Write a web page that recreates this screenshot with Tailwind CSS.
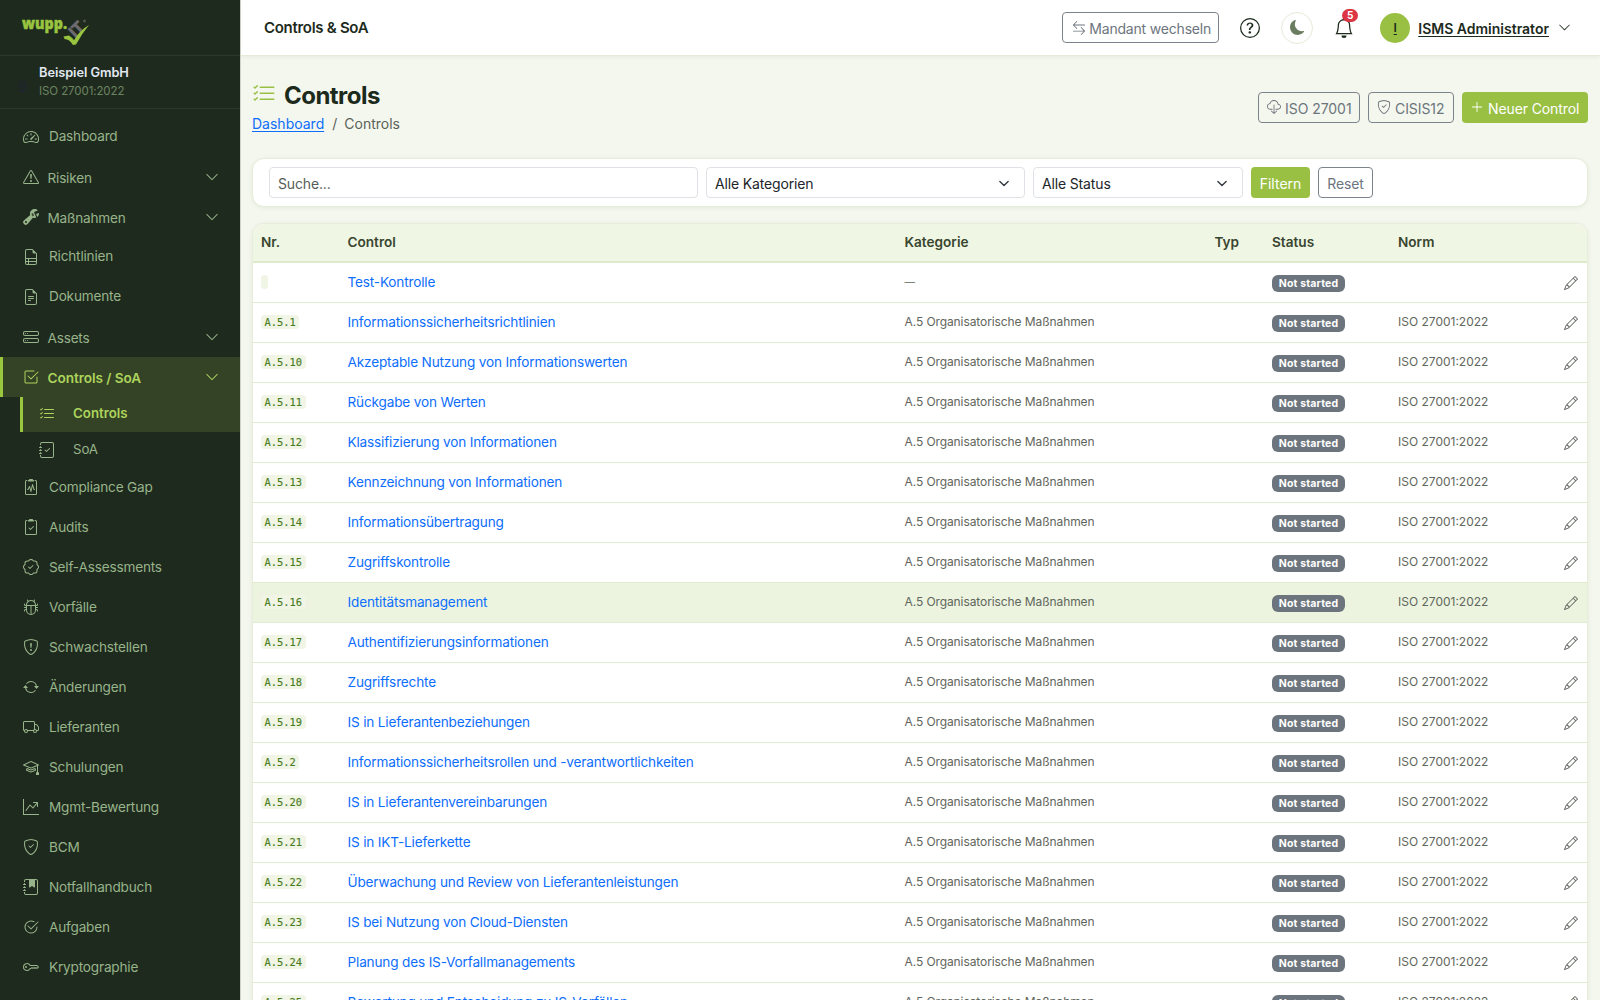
<!DOCTYPE html>
<html lang="de">
<head>
<meta charset="utf-8">
<title>Controls</title>
<script src="https://cdn.jsdelivr.net/npm/@tailwindcss/browser@4"></script>
</head>
<body class="h-[1000px] w-[1600px] overflow-hidden bg-[#f4f7ee] font-['Inter','Noto_Sans',sans-serif] text-[#1c2a1c]">
<svg class="hidden">
  <symbol id="speedometer2" viewBox="0 0 16 16"><path d="M8 4a.5.5 0 0 1 .5.5V6a.5.5 0 0 1-1 0V4.500A.5.5 0 0 1 8 4M3.732 5.732a.5.5 0 0 1 .707 0l.915.914a.5.5 0 1 1-.708.708l-.914-.915a.5.5 0 0 1 0-.707M2 10a.5.5 0 0 1 .5-.5h1.586a.5.5 0 0 1 0 1H2.500A.5.5 0 0 1 2 10m9.500 0a.5.5 0 0 1 .5-.5h1.500a.5.5 0 0 1 0 1H12a.5.5 0 0 1-.5-.5m.754-4.246a.39.39 0 0 0-.527-.02L7.547 9.310a.91.91 0 1 0 1.302 1.258l3.434-4.297a.39.39 0 0 0-.029-.518z"/><path fill-rule="evenodd" d="M0 10a8 8 0 1 1 15.547 2.661c-.442 1.253-1.845 1.602-2.932 1.250C11.309 13.488 9.475 13 8 13c-1.474 0-3.310.488-4.615.911-1.087.352-2.490.003-2.932-1.250A8 8 0 0 1 0 10m8-7a7 7 0 0 0-6.603 9.329c.203.575.923.876 1.680.630C4.397 12.533 6.358 12 8 12s3.604.532 4.923.960c.757.245 1.477-.056 1.680-.631A7 7 0 0 0 8 3"/></symbol>
  <symbol id="warn" viewBox="0 0 16 16"><path d="M7.938 2.016A.13.13 0 0 1 8.002 2a.13.13 0 0 1 .063.016.15.15 0 0 1 .054.057l6.857 11.667c.036.060.035.124.002.183a.2.2 0 0 1-.054.060.1.1 0 0 1-.066.017H1.146a.1.1 0 0 1-.066-.017.2.2 0 0 1-.054-.060.18.18 0 0 1 .002-.183L7.884 2.073a.15.15 0 0 1 .054-.057m1.044-.450a1.130 1.130 0 0 0-1.960 0L.165 13.233c-.457.778.091 1.767.980 1.767h13.713c.889 0 1.438-.990.980-1.767z"/><path d="M7.002 12a1 1 0 1 1 2 0 1 1 0 0 1-2 0M7.100 5.995a.905.905 0 1 1 1.800 0l-.350 3.507a.552.552 0 0 1-1.100 0z"/></symbol>
  <symbol id="wrench" viewBox="0 0 16 16"><path d="M16 4.500a4.500 4.500 0 0 1-1.703 3.526L13 5l2.959-1.110q.040.300.041.610"/><path d="M11.500 9c.653 0 1.273-.139 1.833-.390L12 5.500 11 3l3.826-1.530A4.500 4.500 0 0 0 7.290 6.092l-6.116 5.096a2.583 2.583 0 1 0 3.638 3.638L9.908 8.710A4.500 4.500 0 0 0 11.500 9m-1.292-4.361-.596.893.809-.270a.25.25 0 0 1 .287.377l-.596.893.809-.270.158.475-1.500.500a.25.25 0 0 1-.287-.376l.596-.893-.809.270a.25.25 0 0 1-.287-.377l.596-.893-.809.270-.158-.475 1.500-.500a.25.25 0 0 1 .287.376M3 14a1 1 0 1 1 0-2 1 1 0 0 1 0 2"/></symbol>
  <symbol id="ruled" viewBox="0 0 16 16"><path d="M14 14V4.500L9.500 0H4a2 2 0 0 0-2 2v12a2 2 0 0 0 2 2h8a2 2 0 0 0 2-2M9.500 3A1.500 1.500 0 0 0 11 4.500h2V9H3V2a1 1 0 0 1 1-1h5.500zM3 12v-2h2v2zm0 1h2v2H4a1 1 0 0 1-1-1zm3 2v-2h7v1a1 1 0 0 1-1 1zm7-3H6v-2h7z"/></symbol>
  <symbol id="filetext" viewBox="0 0 16 16"><path d="M5.500 7a.5.5 0 0 0 0 1h5a.5.5 0 0 0 0-1zM5 9.500a.5.5 0 0 1 .5-.5h5a.5.5 0 0 1 0 1h-5a.5.5 0 0 1-.5-.5m0 2a.5.5 0 0 1 .5-.5h2a.5.5 0 0 1 0 1h-2a.5.5 0 0 1-.5-.5"/><path d="M9.500 0H4a2 2 0 0 0-2 2v12a2 2 0 0 0 2 2h8a2 2 0 0 0 2-2V4.500zm0 1v2A1.500 1.500 0 0 0 11 4.500h2V14a1 1 0 0 1-1 1H4a1 1 0 0 1-1-1V2a1 1 0 0 1 1-1z"/></symbol>
  <symbol id="hdd" viewBox="0 0 16 16"><path d="M14 10a1 1 0 0 1 1 1v1a1 1 0 0 1-1 1H2a1 1 0 0 1-1-1v-1a1 1 0 0 1 1-1zM2 9a2 2 0 0 0-2 2v1a2 2 0 0 0 2 2h12a2 2 0 0 0 2-2v-1a2 2 0 0 0-2-2z"/><path d="M5 11.500a.5.5 0 1 1-1 0 .5.5 0 0 1 1 0m-2 0a.5.5 0 1 1-1 0 .5.5 0 0 1 1 0M14 3a1 1 0 0 1 1 1v1a1 1 0 0 1-1 1H2a1 1 0 0 1-1-1V4a1 1 0 0 1 1-1zM2 2a2 2 0 0 0-2 2v1a2 2 0 0 0 2 2h12a2 2 0 0 0 2-2V4a2 2 0 0 0-2-2z"/><path d="M5 4.500a.5.5 0 1 1-1 0 .5.5 0 0 1 1 0m-2 0a.5.5 0 1 1-1 0 .5.5 0 0 1 1 0"/></symbol>
  <symbol id="checksq" viewBox="0 0 16 16"><path d="M3 14.500A1.500 1.500 0 0 1 1.500 13V3A1.500 1.500 0 0 1 3 1.500h8a.5.5 0 0 1 0 1H3a.5.5 0 0 0-.5.5v10a.5.5 0 0 0 .5.5h10a.5.5 0 0 0 .5-.5V8a.5.5 0 0 1 1 0v5a1.500 1.500 0 0 1-1.500 1.500z"/><path d="m8.354 10.354 7-7a.5.5 0 0 0-.708-.708L8 9.293 5.354 6.646a.5.5 0 1 0-.708.708l3 3a.5.5 0 0 0 .708 0"/></symbol>
  <symbol id="listcheck" viewBox="0 0 16 16"><path fill-rule="evenodd" d="M5 11.500a.5.5 0 0 1 .5-.5h9a.5.5 0 0 1 0 1h-9a.5.5 0 0 1-.5-.5m0-4a.5.5 0 0 1 .5-.5h9a.5.5 0 0 1 0 1h-9a.5.5 0 0 1-.5-.5m0-4a.5.5 0 0 1 .5-.5h9a.5.5 0 0 1 0 1h-9a.5.5 0 0 1-.5-.5M3.854 2.146a.5.5 0 0 1 0 .708l-1.500 1.500a.5.5 0 0 1-.708 0l-.5-.5a.5.5 0 1 1 .708-.708L2 3.293l1.146-1.147a.5.5 0 0 1 .708 0m0 4a.5.5 0 0 1 0 .708l-1.500 1.500a.5.5 0 0 1-.708 0l-.5-.5a.5.5 0 1 1 .708-.708L2 7.293l1.146-1.147a.5.5 0 0 1 .708 0m0 4a.5.5 0 0 1 0 .708l-1.500 1.500a.5.5 0 0 1-.708 0l-.5-.5a.5.5 0 0 1 .708-.708l.146.147 1.146-1.147a.5.5 0 0 1 .708 0"/></symbol>
  <symbol id="journal" viewBox="0 0 16 16"><path d="M3 0h10a2 2 0 0 1 2 2v12a2 2 0 0 1-2 2H3a2 2 0 0 1-2-2v-1h1v1a1 1 0 0 0 1 1h10a1 1 0 0 0 1-1V2a1 1 0 0 0-1-1H3a1 1 0 0 0-1 1v1H1V2a2 2 0 0 1 2-2"/><path d="M1 5v-.5a.5.5 0 0 1 1 0V5h.5a.5.5 0 0 1 0 1h-2a.5.5 0 0 1 0-1zm0 3v-.5a.5.5 0 0 1 1 0V8h.5a.5.5 0 0 1 0 1h-2a.5.5 0 0 1 0-1zm0 3v-.5a.5.5 0 0 1 1 0v.5h.5a.5.5 0 0 1 0 1h-2a.5.5 0 0 1 0-1z"/></symbol>
  <symbol id="journalcheck" viewBox="0 0 16 16"><use href="#journal"/><path d="M10.854 6.146a.5.5 0 0 1 0 .708l-3 3a.5.5 0 0 1-.708 0l-1.500-1.500a.5.5 0 1 1 .708-.708L7.500 8.793l2.646-2.647a.5.5 0 0 1 .708 0"/></symbol>
  <symbol id="journalmark" viewBox="0 0 16 16"><use href="#journal"/><path d="M6 1h6v7a.5.5 0 0 1-.757.429L9 7.083 6.757 8.430A.5.5 0 0 1 6 8z"/></symbol>
  <symbol id="clip" viewBox="0 0 16 16"><path d="M9.500 0a.5.5 0 0 1 .5.5.5.5 0 0 0 .5.5.5.5 0 0 1 .5.5V2a.5.5 0 0 1-.5.5h-5A.5.5 0 0 1 5 2v-.5a.5.5 0 0 1 .5-.5.5.5 0 0 0 .5-.5.5.5 0 0 1 .5-.5z"/><path d="M3 2.500a.5.5 0 0 1 .5-.5H4a.5.5 0 0 0 0-1h-.5A1.500 1.500 0 0 0 2 2.500v12A1.500 1.500 0 0 0 3.500 16h9a1.500 1.500 0 0 0 1.500-1.500v-12A1.500 1.500 0 0 0 12.500 1H12a.5.5 0 0 0 0 1h.5a.5.5 0 0 1 .5.5v12a.5.5 0 0 1-.5.5h-9a.5.5 0 0 1-.5-.5z"/></symbol>
  <symbol id="clippulse" viewBox="0 0 16 16"><use href="#clip"/><path d="M9.979 5.356a.5.5 0 0 0-.968.040L7.920 10.490l-.940-3.135a.5.5 0 0 0-.926-.080L4.690 10H4.500a.5.5 0 0 0 0 1H5a.5.5 0 0 0 .447-.276l.936-1.873 1.138 3.793a.5.5 0 0 0 .968-.040L9.580 7.510l.940 3.135A.5.5 0 0 0 11 11h.5a.5.5 0 0 0 0-1h-.128z"/></symbol>
  <symbol id="clipcheck" viewBox="0 0 16 16"><use href="#clip"/><path d="M10.854 7.854a.5.5 0 0 0-.708-.708L7.500 9.793 6.354 8.646a.5.5 0 1 0-.708.708l1.500 1.500a.5.5 0 0 0 .708 0z"/></symbol>
  <symbol id="patch" viewBox="0 0 16 16"><path fill-rule="evenodd" d="M10.354 6.146a.5.5 0 0 1 0 .708l-3 3a.5.5 0 0 1-.708 0l-1.500-1.500a.5.5 0 1 1 .708-.708L7 8.793l2.646-2.647a.5.5 0 0 1 .708 0"/><path d="m10.273 2.513-.921-.944.715-.698.622.637.890-.011a2.890 2.890 0 0 1 2.924 2.924l-.010.890.636.622a2.890 2.890 0 0 1 0 4.134l-.637.622.011.890a2.890 2.890 0 0 1-2.924 2.924l-.890-.010-.622.636a2.890 2.890 0 0 1-4.134 0l-.622-.637-.890.011a2.890 2.890 0 0 1-2.924-2.924l.010-.890-.636-.622a2.890 2.890 0 0 1 0-4.134l.637-.622-.011-.890a2.890 2.890 0 0 1 2.924-2.924l.890.010.622-.636a2.890 2.890 0 0 1 4.134 0l-.715.698a1.890 1.890 0 0 0-2.704 0l-.920.944-1.320-.016a1.890 1.890 0 0 0-1.911 1.912l.016 1.318-.944.921a1.890 1.890 0 0 0 0 2.704l.944.920-.016 1.320a1.890 1.890 0 0 0 1.912 1.911l1.318-.016.921.944a1.890 1.890 0 0 0 2.704 0l.920-.944 1.320.016a1.890 1.890 0 0 0 1.911-1.912l-.016-1.318.944-.921a1.890 1.890 0 0 0 0-2.704l-.944-.920.016-1.320a1.890 1.890 0 0 0-1.912-1.911z"/></symbol>
  <symbol id="bug" viewBox="0 0 16 16"><path d="M4.355.522a.5.5 0 0 1 .623.333l.291.956A5 5 0 0 1 8 1c1.007 0 1.946.298 2.731.811l.290-.956a.5.5 0 1 1 .957.290l-.410 1.352A5 5 0 0 1 13 6h.5a.5.5 0 0 0 .5-.5V5a.5.5 0 0 1 1 0v.5A1.500 1.500 0 0 1 13.500 7H13v1h1.500a.5.5 0 0 1 0 1H13v1h.5a1.500 1.500 0 0 1 1.500 1.500v.5a.5.5 0 1 1-1 0v-.5a.5.5 0 0 0-.5-.5H13a5 5 0 0 1-10 0h-.5a.5.5 0 0 0-.5.5v.5a.5.5 0 1 1-1 0v-.5A1.500 1.500 0 0 1 2.500 10H3V9H1.500a.5.5 0 0 1 0-1H3V7h-.5A1.500 1.500 0 0 1 1 5.500V5a.5.5 0 0 1 1 0v.5a.5.5 0 0 0 .5.5H3c0-1.364.547-2.601 1.432-3.503l-.410-1.352a.5.5 0 0 1 .333-.623M4 7v4a4 4 0 0 0 3.500 3.970V7zm4.500 0v7.970A4 4 0 0 0 12 11V7zM12 6a4 4 0 0 0-1.334-2.982A3.980 3.980 0 0 0 8 2a3.980 3.980 0 0 0-2.667 1.018A4 4 0 0 0 4 6z"/></symbol>
  <symbol id="shield" viewBox="0 0 16 16"><path d="M5.338 1.590a61 61 0 0 0-2.837.856.480.480 0 0 0-.328.390c-.554 4.157.726 7.190 2.253 9.188a10.700 10.700 0 0 0 2.287 2.233c.346.244.652.420.893.533q.180.085.293.118a1 1 0 0 0 .101.025 1 1 0 0 0 .100-.025q.114-.034.294-.118c.240-.113.547-.290.893-.533a10.700 10.700 0 0 0 2.287-2.233c1.527-1.997 2.807-5.031 2.253-9.188a.480.480 0 0 0-.328-.390c-.651-.213-1.750-.560-2.837-.855C9.552 1.290 8.531 1.067 8 1.067c-.530 0-1.552.223-2.662.524zM5.072.560C6.157.265 7.310 0 8 0s1.843.265 2.928.560c1.110.300 2.229.655 2.887.870a1.540 1.540 0 0 1 1.044 1.262c.596 4.477-.787 7.795-2.465 9.990a11.800 11.800 0 0 1-2.517 2.453 7 7 0 0 1-1.048.625c-.280.132-.581.240-.829.240s-.548-.108-.829-.240a7 7 0 0 1-1.048-.625 11.800 11.800 0 0 1-2.517-2.453C1.928 10.487.545 7.169 1.141 2.692A1.540 1.540 0 0 1 2.185 1.430 63 63 0 0 1 5.072.560"/></symbol>
  <symbol id="shieldex" viewBox="0 0 16 16"><use href="#shield"/><path d="M7.001 11a1 1 0 1 1 2 0 1 1 0 0 1-2 0M7.100 4.995a.905.905 0 1 1 1.800 0l-.350 3.507a.553.553 0 0 1-1.100 0z"/></symbol>
  <symbol id="shieldcheck" viewBox="0 0 16 16"><use href="#shield"/><path d="M10.854 5.146a.5.5 0 0 1 0 .708l-3 3a.5.5 0 0 1-.708 0l-1.500-1.500a.5.5 0 1 1 .708-.708L7.500 7.793l2.646-2.647a.5.5 0 0 1 .708 0"/></symbol>
  <symbol id="repeat" viewBox="0 0 16 16"><path d="M11.534 7h3.932a.25.25 0 0 1 .192.410l-1.966 2.360a.25.25 0 0 1-.384 0l-1.966-2.360a.25.25 0 0 1 .192-.410m-11 2h3.932a.25.25 0 0 0 .192-.410L2.692 6.230a.25.25 0 0 0-.384 0L.342 8.590A.25.25 0 0 0 .534 9"/><path fill-rule="evenodd" d="M8 3c-1.552 0-2.940.707-3.857 1.818a.5.5 0 1 1-.771-.636A6.002 6.002 0 0 1 13.917 7H12.900A5 5 0 0 0 8 3M3.100 9a5.002 5.002 0 0 0 8.757 2.182.5.5 0 1 1 .771.636A6.002 6.002 0 0 1 2.083 9z"/></symbol>
  <symbol id="truck" viewBox="0 0 16 16"><path d="M0 3.500A1.500 1.500 0 0 1 1.500 2h9A1.500 1.500 0 0 1 12 3.500V5h1.020a1.500 1.500 0 0 1 1.170.563l1.481 1.850a1.500 1.500 0 0 1 .329.938V10.500a1.500 1.500 0 0 1-1.500 1.500H14a2 2 0 1 1-4 0H5a2 2 0 1 1-3.998-.085A1.500 1.500 0 0 1 0 10.500zm1.294 7.456A2 2 0 0 1 4.732 11h5.536a2 2 0 0 1 .732-.732V3.500a.5.5 0 0 0-.5-.5h-9a.5.5 0 0 0-.5.5v7a.5.5 0 0 0 .294.456M12 10a2 2 0 0 1 1.732 1h.768a.5.5 0 0 0 .5-.5V8.350a.5.5 0 0 0-.110-.312l-1.480-1.850A.5.5 0 0 0 13.020 6H12zm-9 1a1 1 0 1 0 0 2 1 1 0 0 0 0-2m9 0a1 1 0 1 0 0 2 1 1 0 0 0 0-2"/></symbol>
  <symbol id="mortar" viewBox="0 0 16 16"><path d="M8.211 2.047a.5.5 0 0 0-.422 0l-7.500 3.500a.5.5 0 0 0 .025.917l7.500 3a.5.5 0 0 0 .372 0L14 7.140V13a1 1 0 0 0-1 1v2h3v-2a1 1 0 0 0-1-1V6.739l.686-.275a.5.5 0 0 0 .025-.917zM8 8.460 1.758 5.965 8 3.052l6.242 2.913z"/><path d="M4.176 9.032a.5.5 0 0 0-.656.327l-.5 1.700a.5.5 0 0 0 .294.605l4.500 1.800a.5.5 0 0 0 .372 0l4.500-1.800a.5.5 0 0 0 .294-.605l-.5-1.700a.5.5 0 0 0-.656-.327L8 10.466zm-.068 1.873.220-.748 3.496 1.311a.5.5 0 0 0 .352 0l3.496-1.311.220.748L8 12.460z"/></symbol>
  <symbol id="graph" viewBox="0 0 16 16"><path fill-rule="evenodd" d="M0 0h1v15h15v1H0zm10 3.500a.5.5 0 0 1 .5-.5h4a.5.5 0 0 1 .5.5v4a.5.5 0 0 1-1 0V4.900l-3.613 4.417a.5.5 0 0 1-.740.037L7.060 6.767l-3.656 5.027a.5.5 0 0 1-.808-.588l4-5.500a.5.5 0 0 1 .758-.060l2.609 2.610L13.445 4H10.500a.5.5 0 0 1-.5-.5"/></symbol>
  <symbol id="checkcircle" viewBox="0 0 16 16"><path d="M2.500 8a5.500 5.500 0 0 1 8.250-4.764.5.5 0 0 0 .5-.866A6.500 6.500 0 1 0 14.500 8a.5.5 0 0 0-1 0 5.500 5.500 0 1 1-11 0"/><path d="M15.354 3.354a.5.5 0 0 0-.708-.708L8 9.293 5.354 6.646a.5.5 0 1 0-.708.708l3 3a.5.5 0 0 0 .708 0z"/></symbol>
  <symbol id="key" viewBox="0 0 16 16"><path d="M0 8a4 4 0 0 1 7.465-2H14a.5.5 0 0 1 .354.146l1.500 1.500a.5.5 0 0 1 0 .708l-1.500 1.500a.5.5 0 0 1-.708 0L13 9.207l-.646.647a.5.5 0 0 1-.708 0L11 9.207l-.646.647a.5.5 0 0 1-.708 0L9 9.207l-.646.647A.5.5 0 0 1 8 10h-.535A4 4 0 0 1 0 8m4-3a3 3 0 1 0 2.712 4.285A.5.5 0 0 1 7.163 9h.630l.853-.854a.5.5 0 0 1 .708 0l.646.647.646-.647a.5.5 0 0 1 .708 0l.646.647.646-.647a.5.5 0 0 1 .708 0l.646.647.793-.793-1-1h-6.630a.5.5 0 0 1-.451-.285A3 3 0 0 0 4 5"/><path d="M4 8a1 1 0 1 1-2 0 1 1 0 0 1 2 0"/></symbol>
  <symbol id="megaphone" viewBox="0 0 16 16"><path d="M13 2.500a1.500 1.500 0 0 1 3 0v11a1.500 1.500 0 0 1-3 0v-.214c-2.162-1.241-4.490-1.843-6.912-2.083l.405 2.712A1 1 0 0 1 5.510 15.100h-.548a1 1 0 0 1-.916-.599l-1.850-3.490A2.010 2.010 0 0 1 0 9V7a2.020 2.020 0 0 1 1.992-2.013 75 75 0 0 0 2.483-.075c3.043-.154 6.148-.849 8.525-2.199z"/></symbol>
  <symbol id="chev" viewBox="0 0 16 16"><path fill-rule="evenodd" d="M1.646 4.646a.5.5 0 0 1 .708 0L8 10.293l5.646-5.647a.5.5 0 0 1 .708.708l-6 6a.5.5 0 0 1-.708 0l-6-6a.5.5 0 0 1 0-.708"/></symbol>
  <symbol id="swap" viewBox="0 0 16 16"><path fill-rule="evenodd" d="M1 11.500a.5.5 0 0 0 .5.5h11.793l-3.147 3.146a.5.5 0 0 0 .708.708l4-4a.5.5 0 0 0 0-.708l-4-4a.5.5 0 0 0-.708.708L13.293 11H1.500a.5.5 0 0 0-.5.5m14-7a.5.5 0 0 1-.5.5H2.707l3.147 3.146a.5.5 0 1 1-.708.708l-4-4a.5.5 0 0 1 0-.708l4-4a.5.5 0 1 1 .708.708L2.707 4H14.500a.5.5 0 0 1 .5.5"/></symbol>
  <symbol id="question" viewBox="0 0 16 16"><path d="M8 15A7 7 0 1 1 8 1a7 7 0 0 1 0 14m0 1A8 8 0 1 0 8 0a8 8 0 0 0 0 16"/><path d="M5.255 5.786a.237.237 0 0 0 .241.247h.825c.138 0 .248-.113.266-.250.090-.656.540-1.134 1.342-1.134.686 0 1.314.343 1.314 1.168 0 .635-.374.927-.965 1.371-.673.489-1.206 1.060-1.168 1.987l.003.217a.25.25 0 0 0 .25.246h.811a.25.25 0 0 0 .25-.25v-.105c0-.718.273-.927 1.010-1.486.609-.463 1.244-.977 1.244-2.056 0-1.511-1.276-2.241-2.673-2.241-1.267 0-2.655.590-2.750 2.286m1.557 5.763c0 .533.425.927 1.010.927.609 0 1.028-.394 1.028-.927 0-.552-.420-.940-1.029-.940-.584 0-1.009.388-1.009.940"/></symbol>
  <symbol id="moon" viewBox="0 0 16 16"><path d="M6 .278a.770.770 0 0 1 .080.858 7.200 7.200 0 0 0-.878 3.460c0 4.021 3.278 7.277 7.318 7.277q.792-.001 1.533-.160a.790.790 0 0 1 .810.316.730.730 0 0 1-.031.893A8.350 8.350 0 0 1 8.344 16C3.734 16 0 12.286 0 7.710 0 4.266 2.114 1.312 5.124.060A.750.750 0 0 1 6 .278"/></symbol>
  <symbol id="bell" viewBox="0 0 16 16"><path d="M8 16a2 2 0 0 0 2-2H6a2 2 0 0 0 2 2M8 1.918l-.797.161A4 4 0 0 0 4 6c0 .628-.134 2.197-.459 3.742-.160.767-.376 1.566-.663 2.258h10.244c-.287-.692-.502-1.490-.663-2.258C12.134 8.197 12 6.628 12 6a4 4 0 0 0-3.203-3.920zM14.220 12c.223.447.481.801.780 1H1c.299-.199.557-.553.780-1C2.680 10.200 3 6.880 3 6c0-2.420 1.720-4.440 4.005-4.901a1 1 0 1 1 1.990 0A5 5 0 0 1 13 6c0 .880.320 4.200 1.220 6"/></symbol>
  <symbol id="cloud" viewBox="0 0 16 16"><path d="M4.406 1.342A5.530 5.530 0 0 1 8 0c2.690 0 4.923 2 5.166 4.579C14.758 4.804 16 6.137 16 7.773 16 9.569 14.502 11 12.687 11H10a.5.5 0 0 1 0-1h2.688C13.979 10 15 8.988 15 7.773c0-1.216-1.020-2.228-2.313-2.228h-.5v-.5C12.188 2.825 10.328 1 8 1a4.530 4.530 0 0 0-2.941 1.100c-.757.652-1.153 1.438-1.153 2.055v.448l-.445.049C2.064 4.805 1 5.952 1 7.318 1 8.785 2.230 10 3.781 10H6a.5.5 0 0 1 0 1H3.781C1.708 11 0 9.366 0 7.318c0-1.763 1.266-3.223 2.942-3.593.143-.863.698-1.723 1.464-2.383"/><path d="M7.646 15.854a.5.5 0 0 0 .708 0l3-3a.5.5 0 0 0-.708-.708L8.500 14.293V5.500a.5.5 0 0 0-1 0v8.793l-2.146-2.147a.5.5 0 0 0-.708.708z"/></symbol>
  <symbol id="plus" viewBox="0 0 16 16"><path fill-rule="evenodd" d="M8 2a.5.5 0 0 1 .5.5v5h5a.5.5 0 0 1 0 1h-5v5a.5.5 0 0 1-1 0v-5h-5a.5.5 0 0 1 0-1h5v-5A.5.5 0 0 1 8 2"/></symbol>
  <symbol id="pencil" viewBox="0 0 16 16"><path d="M12.146.146a.5.5 0 0 1 .708 0l3 3a.5.5 0 0 1 0 .708l-10 10a.5.5 0 0 1-.168.110l-5 2a.5.5 0 0 1-.650-.650l2-5a.5.5 0 0 1 .110-.168zM11.207 2.500 13.500 4.793 14.793 3.500 12.500 1.207zm1.586 3L10.500 3.207 4 9.707V10h.5a.5.5 0 0 1 .5.5v.5h.5a.5.5 0 0 1 .5.5v.5h.293zm-9.761 5.175-.106.106-1.528 3.821 3.821-1.528.106-.106A.5.5 0 0 1 5 12.500V12h-.5a.5.5 0 0 1-.5-.5V11h-.5a.5.5 0 0 1-.468-.325"/></symbol>
  <symbol id="building" viewBox="0 0 16 16"><path d="M4 2h2v2H4zm3 0h2v2H7zm3 0h2v2h-2zM4 5h2v2H4zm3 0h2v2H7zm3 0h2v2h-2zM4 8h2v2H4zm3 0h2v2H7zm3 0h2v2h-2z"/><path d="M2 1a1 1 0 0 1 1-1h10a1 1 0 0 1 1 1v14a1 1 0 0 1-1 1H3a1 1 0 0 1-1-1zm11 0H3v14h3v-2.500a.5.5 0 0 1 .5-.5h3a.5.5 0 0 1 .5.5V15h3z"/></symbol>
</svg>

<div class="flex h-full">
  <aside class="flex w-60 shrink-0 flex-col overflow-hidden bg-[#1f2a1f]">
    <div class="h-14 shrink-0 border-b border-[#2d382d] pl-5">
      <svg class="h-[55px] w-[75px]" viewBox="20 0 75 55">
        <text x="22" y="28.500" textLength="45" lengthAdjust="spacingAndGlyphs" class="fill-[#99c43f] stroke-[#99c43f] stroke-[0.5] font-['Open_Sans'] text-[16.500px] font-extrabold">wupp.</text>
        <text x="0" y="0" transform="translate(75 38) rotate(-44)" class="fill-[#6d6b6f] stroke-[#6d6b6f] stroke-[0.8] font-['Liberation_Sans'] text-[16px] font-bold">IT</text>
        <circle cx="84.500" cy="21" r="1.600" class="fill-[#4b524b]"/>
        <path d="M63.500 36.500 69 35.500Q72 37.500 74 40.200 79.500 30.500 89 25 82 33.500 76 44.500L73 45Q69.500 39 64.500 39Z" class="fill-[#99c43f]"/>
      </svg>
    </div>
    <div class="flex h-[53px] shrink-0 items-center gap-[11px] border-b border-[#2d382d] pl-[17px]">
      <svg class="mt-2 size-[11px] fill-[#1e2430]"><use href="#building"/></svg>
      <div class="-mt-px">
        <div class="text-[12.800px] leading-[19px] font-semibold tracking-[-0.050px] text-[#e2e8f0]">Beispiel GmbH</div>
        <div class="text-[11.500px] leading-[18px] tracking-[-0.090px] text-[#6b8560]">ISO 27001:2022</div>
      </div>
    </div>
    <nav id="nav" class="flex flex-col pt-2"></nav>
  </aside>

  <div class="flex min-w-0 flex-1 flex-col border-l border-[#cfd4c8]">
    <header class="relative flex h-14 shrink-0 items-center border-b border-[#e4ebd8] bg-white pr-[29px] pl-[23px] shadow-[0_1px_4px_rgba(60,90,20,0.08)]">
      <h1 class="flex-1 pt-[2px] text-[15px] font-semibold tracking-[-0.290px] text-[#1c2a1c]">Controls &amp; SoA</h1>
      <button class="flex h-[31px] w-[157px] items-center gap-[3px] rounded border border-[#7b848c] pl-[9px] text-[14px] tracking-[-0.190px] whitespace-nowrap text-[#6c757d]"><svg class="size-[14px] shrink-0 fill-current"><use href="#swap"/></svg><span class="pt-px">Mandant wechseln</span></button>
      <svg class="ml-[21px] size-5 fill-[#1c2a1c]"><use href="#question"/></svg>
      <span class="ml-[21px] flex size-8 items-center justify-center rounded-full border border-[#e4ebd8]"><svg class="size-[15px] fill-[#6b7d60]"><use href="#moon"/></svg></span>
      <span class="relative ml-[21px] size-[20px]"><svg class="size-[20px] fill-[#1c2a1c]"><use href="#bell"/></svg><span class="absolute -top-[9px] left-[8px] flex h-[13px] w-[16px] items-center justify-center rounded-full bg-[#dc3545] text-[10px] font-bold text-white">5</span></span>
      <span class="ml-[26px] flex size-[30px] items-center justify-center rounded-full bg-[#99c043] pt-px text-[12px] font-semibold underline underline-offset-2">I</span>
      <span class="ml-2 pt-px text-[14px] font-semibold underline underline-offset-2">ISMS Administrator</span>
      <svg class="ml-[9px] size-[13px] fill-[#1c2a1c]"><use href="#chev"/></svg>
    </header>

    <main class="flex flex-col pt-6 pr-3 pl-[11px]">
      <div class="flex h-[55px] items-start justify-between">
        <div>
          <div class="flex h-[30px] items-center gap-2"><svg class="mb-[3px] size-6 fill-[#99c043]"><use href="#listcheck"/></svg><h2 class="pt-px text-[24px] font-bold tracking-[-0.530px]">Controls</h2></div>
          <div class="mt-[2px] flex text-[14px] leading-[24px] text-[#5b6259]"><a class="text-[#0d6efd] underline underline-offset-2">Dashboard</a><span class="pr-[7px] pl-[8px]">/</span><span>Controls</span></div>
        </div>
        <div class="mt-3 flex gap-2 text-[14px] whitespace-nowrap text-[#6c757d]">
          <button class="flex h-[31px] w-[102px] items-center gap-1 rounded border border-[#7b848c] pl-2"><svg class="mb-px size-[14px] fill-current"><use href="#cloud"/></svg><span class="pt-px tracking-[-0.050px]">ISO 27001</span></button>
          <button class="flex h-[31px] w-[86px] items-center gap-1 rounded border border-[#7b848c] pl-2"><svg class="mb-px size-[14px] fill-current"><use href="#shieldcheck"/></svg><span class="pt-px tracking-[-0.080px]">CISIS12</span></button>
          <button class="flex h-[31px] w-[126px] items-center gap-1 rounded bg-[#99c043] pl-2 text-white"><svg class="mb-px size-[14px] fill-current"><use href="#plus"/></svg><span class="pt-px tracking-[-0.110px]">Neuer Control</span></button>
        </div>
      </div>

      <div class="mt-[23px] flex h-[49px] items-center gap-2 rounded-xl border border-[#e6edd9] bg-white px-4 text-[14px] tracking-[-0.150px] shadow-[0_1px_4px_rgba(60,90,20,0.08)]">
        <div class="flex h-[31px] w-[429px] items-center rounded border border-[#dee2e6] px-2 pt-px text-[#565d58]">Suche...</div>
        <div class="flex h-[31px] w-[319px] items-center justify-between rounded border border-[#dee2e6] pt-px pr-[14px] pl-2 text-[#212529]">Alle Kategorien<svg class="h-[11px] w-[12px]" viewBox="0 0 16 16"><path d="m2 5 6 6 6-6" class="fill-none stroke-[#343a40] stroke-2" stroke-linecap="round" stroke-linejoin="round"/></svg></div>
        <div class="flex h-[31px] w-[210px] items-center justify-between rounded border border-[#dee2e6] pt-px pr-[14px] pl-2 text-[#212529]">Alle Status<svg class="h-[11px] w-[12px]" viewBox="0 0 16 16"><path d="m2 5 6 6 6-6" class="fill-none stroke-[#343a40] stroke-2" stroke-linecap="round" stroke-linejoin="round"/></svg></div>
        <button class="flex h-[31px] w-[59px] items-center justify-center rounded bg-[#99c043] pt-px tracking-normal text-white">Filtern</button>
        <button class="flex h-[31px] w-[55px] items-center justify-center rounded border border-[#7b848c] pt-px text-[#6c757d]">Reset</button>
      </div>

      <div class="mt-4 rounded-t-xl border border-[#e6edd9] bg-white shadow-[0_1px_4px_rgba(60,90,20,0.08)]">
        <div class="grid h-[39px] grid-cols-[86.5px_557px_310px_57.5px_126px_1fr] items-center rounded-t-xl border-b-2 border-[#dfeacb] bg-[#eff6e3] pl-2 text-[13.600px] font-semibold text-[#39452f]"><span>Nr.</span><span>Control</span><span>Kategorie</span><span>Typ</span><span>Status</span><span>Norm</span></div>
        <div id="rows"></div>
      </div>
    </main>
  </div>
</div>

<script>
const icon = (id, cls) => `<svg class="${cls}"><use href="#${id}"/></svg>`;

const nav = [
  ['speedometer2','Dashboard','upper'],['warn','Risiken','toggle'],['wrench','Maßnahmen','toggle'],['ruled','Richtlinien','upper'],
  ['filetext','Dokumente','upper'],['hdd','Assets','toggle'],['checksq','Controls / SoA','open'],['listcheck','Controls','subactive'],
  ['journalcheck','SoA','sub'],['clippulse','Compliance Gap'],['clipcheck','Audits'],['patch','Self-Assessments'],['bug','Vorfälle'],
  ['shieldex','Schwachstellen'],['repeat','Änderungen'],['truck','Lieferanten'],['mortar','Schulungen'],['graph','Mgmt-Bewertung'],
  ['shieldcheck','BCM'],['journalmark','Notfallhandbuch'],['checkcircle','Aufgaben'],['key','Kryptographie'],['megaphone','Awareness']
];
const kinds = {
  link: 'flex h-10 shrink-0 items-center gap-[10px] border-l-[3px] border-transparent pl-5 pr-[21px] text-[13.600px] tracking-[-0.180px] text-[#97b48a]',
  toggle: 'flex h-10 shrink-0 items-center gap-[8.500px] border-l-[3px] border-transparent pl-5 pr-[21px] pt-[2px] text-[13.600px] tracking-[-0.200px] text-[#97b48a]',
  open: 'flex h-10 shrink-0 items-center gap-[8.500px] border-l-[3px] border-[#99c83f] bg-[#344226] pl-5 pr-[21px] pt-[2px] text-[13.600px] font-semibold tracking-[-0.060px] text-[#add45c]',
  subactive: 'ml-5 flex h-[35px] shrink-0 items-center gap-[18px] border-l-[3px] border-[#99c83f] bg-[#344226] pl-4 pb-[2px] text-[13.300px] font-semibold text-[#add45c]',
  sub: 'ml-5 flex h-[35px] shrink-0 items-center gap-[18px] border-l-[3px] border-transparent pl-4 text-[13.300px] tracking-[-0.100px] text-[#97b48a]'
};
kinds.upper = kinds.link;
document.getElementById('nav').innerHTML = nav.map(([i, t, k = 'link']) => {
  const fold = k === 'toggle' || k === 'open';
  return `<a class="${kinds[k]}">${icon(i, fold ? '-mt-[2px] size-4 shrink-0 fill-current' : 'size-4 shrink-0 fill-current')}<span class="${k === 'upper' ? 'flex-1 pb-[2px]' : fold ? 'flex-1 pt-px' : 'flex-1'}">${t}</span>${fold ? icon('chev', '-mt-[2px] size-[14px] fill-current') : ''}</a>`;
}).join('');

const controls = [
  ['','Test-Kontrolle'],['A.5.1','Informationssicherheitsrichtlinien'],['A.5.10','Akzeptable Nutzung von Informationswerten'],
  ['A.5.11','Rückgabe von Werten'],['A.5.12','Klassifizierung von Informationen'],['A.5.13','Kennzeichnung von Informationen'],
  ['A.5.14','Informationsübertragung'],['A.5.15','Zugriffskontrolle'],['A.5.16','Identitätsmanagement'],['A.5.17','Authentifizierungsinformationen'],
  ['A.5.18','Zugriffsrechte'],['A.5.19','IS in Lieferantenbeziehungen'],['A.5.2','Informationssicherheitsrollen und -verantwortlichkeiten'],
  ['A.5.20','IS in Lieferantenvereinbarungen'],['A.5.21','IS in IKT-Lieferkette'],['A.5.22','Überwachung und Review von Lieferantenleistungen'],
  ['A.5.23','IS bei Nutzung von Cloud-Diensten'],['A.5.24','Planung des IS-Vorfallmanagements'],['A.5.25','Bewertung und Entscheidung zu IS-Vorfällen']
];
const row = 'grid h-10 grid-cols-[86.5px_557px_310px_57.5px_126px_1fr_auto] items-center border-b border-[#e2ecd0] pr-[9px] pl-2';
const rowHover = 'grid h-10 grid-cols-[86.5px_557px_310px_57.5px_126px_1fr_auto] items-center border-b border-[#e2ecd0] bg-[#ecf4df] pr-[9px] pl-2';
document.getElementById('rows').innerHTML = controls.map(([n, t]) => `
  <div class="${n === 'A.5.16' ? rowHover : row}">
    <span class="flex pb-px"><code class="h-[14px] rounded bg-[#f0f5e6] px-[3.500px] font-['DejaVu_Sans_Mono',monospace] text-[10.400px] leading-[14px] font-normal text-[#4a7c1f] [-webkit-text-stroke:0.15px_#4a7c1f]">${n}</code></span>
    <a class="text-[13.600px] tracking-[-0.165px] text-[#0d6efd]">${t}</a>
    <span class="pb-px text-[12px] tracking-[-0.090px] text-[#5f665c]">${n ? 'A.5 Organisatorische Maßnahmen' : '<span class="text-[10.500px]">—</span>'}</span>
    <span></span>
    <span class="flex pt-[2px]"><span class="flex h-[17px] w-[73px] items-center justify-center rounded-md bg-[#6c757d] text-[10.500px] font-bold tracking-[0.150px] text-white">Not started</span></span>
    <span class="pb-px text-[12px] text-[#5f665c]">${n ? 'ISO 27001:2022' : ''}</span>
    ${icon('pencil', 'size-[14px] fill-[#5b6259]')}
  </div>`).join('');
</script>
</body>
</html>
